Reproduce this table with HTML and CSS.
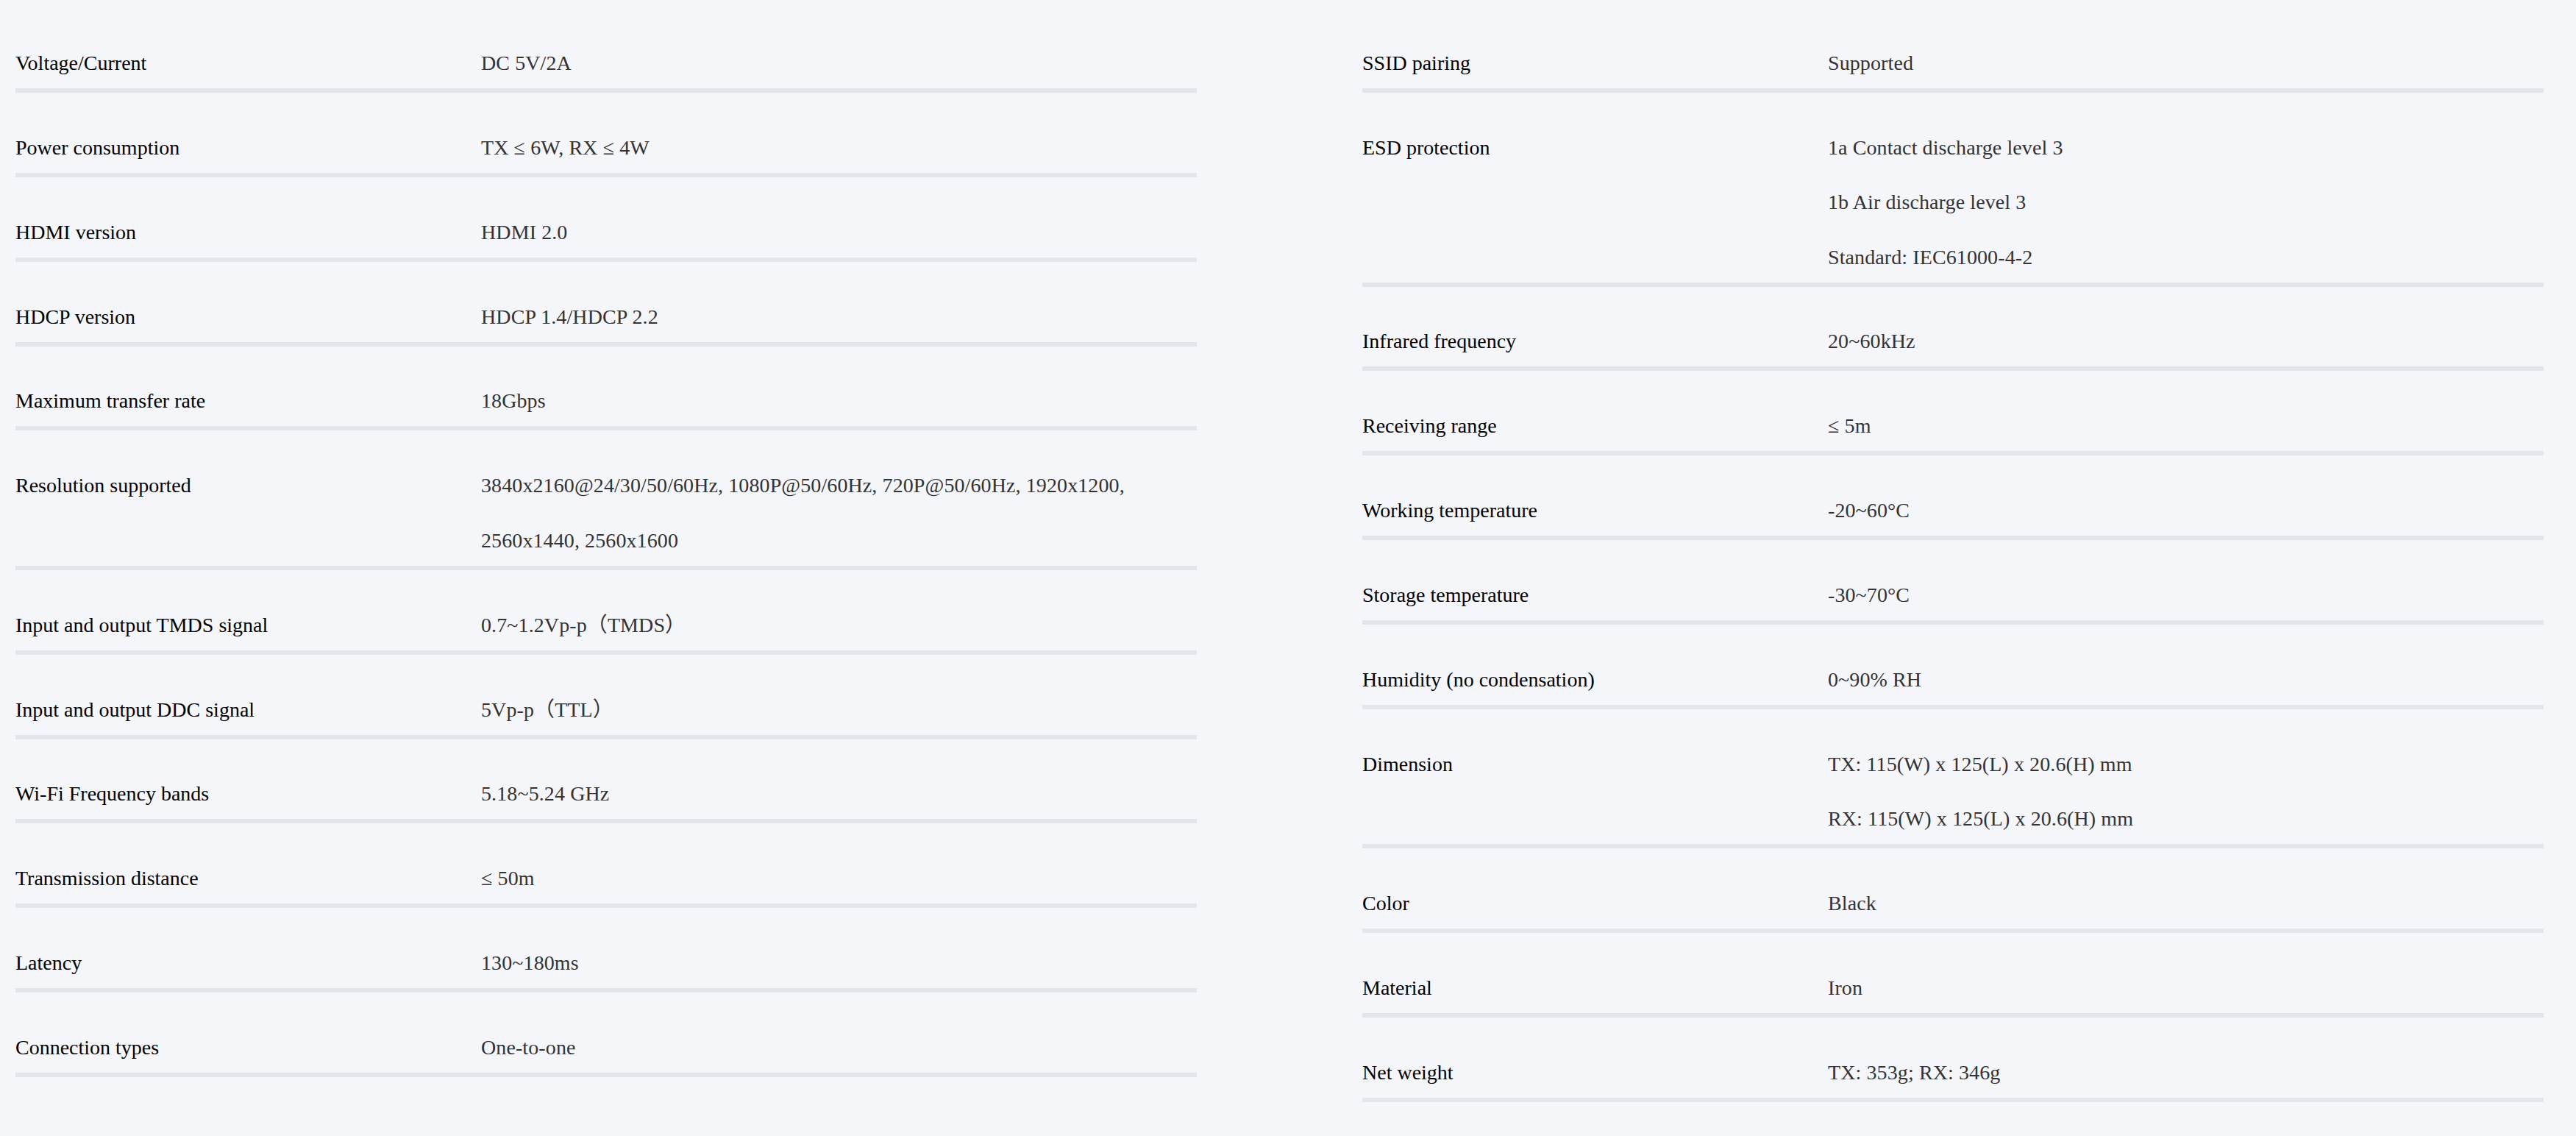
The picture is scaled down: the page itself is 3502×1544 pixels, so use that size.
FILE: index.html
```html
<!DOCTYPE html>
<html lang="en">
<head>
<meta charset="utf-8">
<title>Specifications</title>
<link rel="stylesheet" href="styles.css">
</head>
<body>
<main class="specs">
  <section class="spec-col">
    <div class="spec-row"><div class="spec-label">Voltage/Current</div><div class="spec-value"><div class="line">DC 5V/2A</div></div></div>
    <div class="spec-row"><div class="spec-label">Power consumption</div><div class="spec-value"><div class="line">TX ≤ 6W, RX ≤ 4W</div></div></div>
    <div class="spec-row"><div class="spec-label">HDMI version</div><div class="spec-value"><div class="line">HDMI 2.0</div></div></div>
    <div class="spec-row"><div class="spec-label">HDCP version</div><div class="spec-value"><div class="line">HDCP 1.4/HDCP 2.2</div></div></div>
    <div class="spec-row"><div class="spec-label">Maximum transfer rate</div><div class="spec-value"><div class="line">18Gbps</div></div></div>
    <div class="spec-row"><div class="spec-label">Resolution supported</div><div class="spec-value"><div class="line">3840x2160@24/30/50/60Hz, 1080P@50/60Hz, 720P@50/60Hz, 1920x1200,</div><div class="line">2560x1440, 2560x1600</div></div></div>
    <div class="spec-row"><div class="spec-label">Input and output TMDS signal</div><div class="spec-value"><div class="line">0.7~1.2Vp-p（TMDS）</div></div></div>
    <div class="spec-row"><div class="spec-label">Input and output DDC signal</div><div class="spec-value"><div class="line">5Vp-p（TTL）</div></div></div>
    <div class="spec-row"><div class="spec-label">Wi-Fi Frequency bands</div><div class="spec-value"><div class="line">5.18~5.24 GHz</div></div></div>
    <div class="spec-row"><div class="spec-label">Transmission distance</div><div class="spec-value"><div class="line">≤ 50m</div></div></div>
    <div class="spec-row"><div class="spec-label">Latency</div><div class="spec-value"><div class="line">130~180ms</div></div></div>
    <div class="spec-row"><div class="spec-label">Connection types</div><div class="spec-value"><div class="line">One-to-one</div></div></div>
  </section>
  <section class="spec-col">
    <div class="spec-row"><div class="spec-label">SSID pairing</div><div class="spec-value"><div class="line">Supported</div></div></div>
    <div class="spec-row"><div class="spec-label">ESD protection</div><div class="spec-value"><div class="line">1a Contact discharge level 3</div><div class="line">1b Air discharge level 3</div><div class="line">Standard: IEC61000-4-2</div></div></div>
    <div class="spec-row"><div class="spec-label">Infrared frequency</div><div class="spec-value"><div class="line">20~60kHz</div></div></div>
    <div class="spec-row"><div class="spec-label">Receiving range</div><div class="spec-value"><div class="line">≤ 5m</div></div></div>
    <div class="spec-row"><div class="spec-label">Working temperature</div><div class="spec-value"><div class="line">-20~60°C</div></div></div>
    <div class="spec-row"><div class="spec-label">Storage temperature</div><div class="spec-value"><div class="line">-30~70°C</div></div></div>
    <div class="spec-row"><div class="spec-label">Humidity (no condensation)</div><div class="spec-value"><div class="line">0~90% RH</div></div></div>
    <div class="spec-row"><div class="spec-label">Dimension</div><div class="spec-value"><div class="line">TX: 115(W) x 125(L) x 20.6(H) mm</div><div class="line">RX: 115(W) x 125(L) x 20.6(H) mm</div></div></div>
    <div class="spec-row"><div class="spec-label">Color</div><div class="spec-value"><div class="line">Black</div></div></div>
    <div class="spec-row"><div class="spec-label">Material</div><div class="spec-value"><div class="line">Iron</div></div></div>
    <div class="spec-row"><div class="spec-label">Net weight</div><div class="spec-value"><div class="line">TX: 353g; RX: 346g</div></div></div>
  </section>
</main>
</body>
</html>
```

FILE: styles.css
```css
html, body {
  margin: 0;
  padding: 0;
  background: #f5f6fa;
}

body {
  font-family: "Liberation Serif", "Noto Sans CJK SC", serif;
  font-size: 28px;
  color: #000;
}

.specs {
  display: flex;
  align-items: flex-start;
  gap: 225px;
  padding: 11px 0 0 21px;
}

.spec-col {
  flex: 0 0 1606px;
  display: flex;
  flex-direction: column;
}

.spec-row {
  display: grid;
  grid-template-columns: 633px 1fr;
  padding-top: 40.9px;
  border-bottom: 6px solid #e4e5eb;
}

.spec-label {
  line-height: 68px;
  color: #000;
}

.spec-value {
  display: flex;
  flex-direction: column;
  gap: 6.4px;
  color: #333;
  letter-spacing: 0.1px;
}

.spec-value .line {
  line-height: 68px;
}
```
